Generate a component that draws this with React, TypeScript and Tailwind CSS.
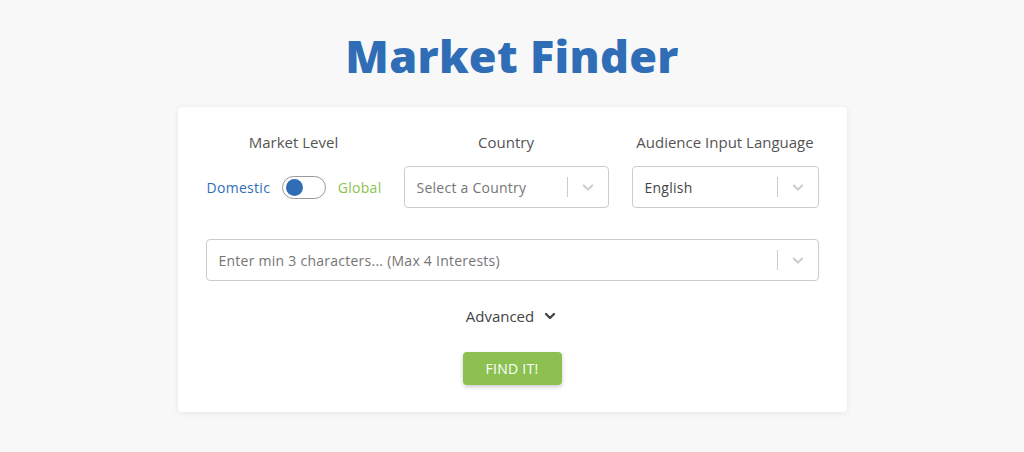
import { ChevronDown } from "lucide-react";

function SelectBox({ text, placeholder, className }: { text: string; placeholder?: boolean; className?: string }) {
  return (
    <div
      className={`flex h-[42px] items-center rounded border border-[#cccccc] bg-white ${className ?? ""}`}
    >
      <span
        className={`flex-1 truncate pl-3 text-[14px] tracking-[0.25px] ${placeholder ? "text-[#757575]" : "text-[#444]"}`}
      >
        {text}
      </span>
      <span className="h-5 w-px bg-[#cccccc]" />
      <span className="flex w-[40px] items-center justify-center text-[#cccccc]">
        <svg width="18" height="18" viewBox="0 0 20 20" fill="currentColor">
          <path d="M4.516 7.548c0.436-0.446 1.043-0.481 1.576 0l3.908 3.747 3.908-3.747c0.533-0.481 1.141-0.446 1.574 0 0.436 0.445 0.408 1.197 0 1.615-0.406 0.418-4.695 4.502-4.695 4.502-0.217 0.223-0.502 0.335-0.787 0.335s-0.57-0.112-0.789-0.335c0 0-4.287-4.084-4.695-4.502s-0.436-1.17 0-1.615z" />
        </svg>
      </span>
    </div>
  );
}

export default function App() {
  return (
    <div
      className="min-h-[452px] bg-[#f8f8f8] pt-[26px]"
      style={{ fontFamily: "'Open Sans', 'Liberation Sans', sans-serif" }}
    >
      <h1 className="text-center text-[45px] font-extrabold leading-[60px] tracking-[0.3px] text-[#2f6eb7]">
        Market Finder
      </h1>

      <div className="mx-auto mt-[21px] w-[669px] rounded bg-white px-[28px] pb-[27px] pt-[25px] shadow-[0_1px_6px_rgba(0,0,0,0.08)]">
        <div className="flex gap-[22px]">
          <div className="w-[176px]">
            <div className="text-center text-[15px] leading-[20px] text-[#555]">Market Level</div>
            <div className="mt-[14px] flex h-[42px] items-center gap-[12px] pl-[1px]">
              <span className="text-[14px] tracking-[0.3px] text-[#2f6eb7]">Domestic</span>
              <span className="flex h-[23px] w-[44px] items-center rounded-full border border-[#999] bg-white px-[3px]">
                <span className="h-[17px] w-[17px] rounded-full bg-[#2f6eb7]" />
              </span>
              <span className="text-[14px] tracking-[0.3px] text-[#8cc152]">Global</span>
            </div>
          </div>
          <div className="w-[205px]">
            <div className="text-center text-[15px] leading-[20px] text-[#555]">Country</div>
            <SelectBox text="Select a Country" placeholder className="mt-[14px]" />
          </div>
          <div className="ml-px w-[187px]">
            <div className="text-center text-[15px] leading-[20px] text-[#555]">Audience Input Language</div>
            <SelectBox text="English" className="mt-[14px]" />
          </div>
        </div>

        <SelectBox text="Enter min 3 characters... (Max 4 Interests)" placeholder className="mt-[31px]" />

        <div className="mt-[24px] flex items-center justify-center gap-[8px] text-[15px] text-[#444]">
          <span>Advanced</span>
          <ChevronDown size={16} strokeWidth={3.5} />
        </div>

        <div className="mt-[24px] flex justify-center">
          <button className="h-[33px] w-[99px] rounded bg-[#8cc152] text-[14px] tracking-[0.3px] text-white shadow-[0_2px_4px_rgba(0,0,0,0.2)]">
            FIND IT!
          </button>
        </div>
      </div>
    </div>
  );
}
